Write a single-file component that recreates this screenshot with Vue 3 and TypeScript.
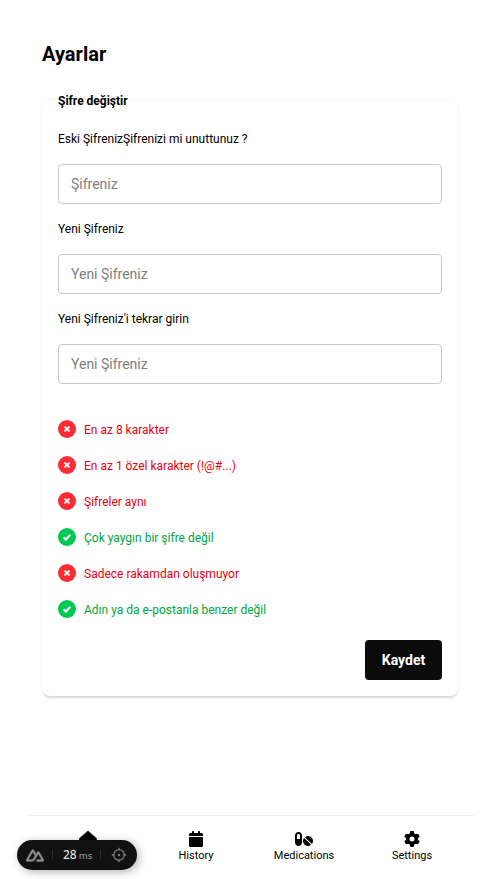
<script setup lang="ts">
import { ref } from 'vue'

interface Field { label: string; placeholder: string }
interface Rule { text: string; ok: boolean }
interface NavItem { label: string; viewBox: string; width: number; path: string }

const fields: Field[] = [
  { label: 'Eski ŞifrenizŞifrenizi mi unuttunuz ?', placeholder: 'Şifreniz' },
  { label: 'Yeni Şifreniz', placeholder: 'Yeni Şifreniz' },
  { label: "Yeni Şifreniz'i tekrar girin", placeholder: 'Yeni Şifreniz' },
]
const values = ref<string[]>(['', '', ''])

const rules: Rule[] = [
  { text: 'En az 8 karakter', ok: false },
  { text: 'En az 1 özel karakter (!@#...)', ok: false },
  { text: 'Şifreler aynı', ok: false },
  { text: 'Çok yaygın bir şifre değil', ok: true },
  { text: 'Sadece rakamdan oluşmuyor', ok: false },
  { text: 'Adın ya da e-postanla benzer değil', ok: true },
]

const nav: NavItem[] = [
  {
    label: 'Home', viewBox: '0 0 576 512', width: 18,
    path: 'M575.8 255.5c0 18-15 32.1-32 32.1h-32l.7 160.2c0 35-28 64.2-64 64.2H352V352H224v160H128c-36 0-64-29-64-64V287.600H32c-18 0-32-14-32-32.100c0-9 3-17 10-24L266.400 8c7-7 15-8 22-8s15 2 21 7L564.800 231.500c8 7 12 15 11 24z',
  },
  {
    label: 'History', viewBox: '0 0 448 512', width: 14,
    path: 'M96 32V64H48C21.5 64 0 85.5 0 112v48H448V112c0-26.5-21.5-48-48-48H352V32c0-17.7-14.3-32-32-32s-32 14.3-32 32V64H160V32c0-17.7-14.3-32-32-32S96 14.3 96 32zM448 192H0V464c0 26.5 21.5 48 48 48H400c26.5 0 48-21.5 48-48V192z',
  },
  {
    label: 'Medications', viewBox: '0 0 576 512', width: 18,
    path: 'M112 96c-26.5 0-48 21.5-48 48V256h96V144c0-26.5-21.5-48-48-48zM0 144C0 82.1 50.1 32 112 32s112 50.1 112 112V368c0 61.9-50.1 112-112 112S0 429.9 0 368V144zM554.9 399.4c-7.1 12.3-23.7 13.1-33.8 3.1L333.5 214.9c-10-10-9.3-26.7 3.1-33.8C360 167.7 387.1 160 416 160c88.4 0 160 71.6 160 160c0 28.9-7.7 56-21.1 79.4zm-59.5 59.5C472 472.3 444.9 480 416 480c-88.4 0-160-71.6-160-160c0-28.9 7.7-56 21.1-79.4c7.1-12.3 23.7-13.1 33.8-3.1L498.5 425.1c10 10 9.3 26.7-3.1 33.8z',
  },
  {
    label: 'Settings', viewBox: '0 0 512 512', width: 16,
    path: 'M495.9 166.6c3.2 8.7 .5 18.4-6.4 24.6l-43.3 39.4c1.1 8.3 1.7 16.8 1.7 25.4s-.6 17.1-1.7 25.4l43.3 39.4c6.9 6.2 9.6 15.9 6.4 24.6c-4.4 11.9-9.7 23.3-15.8 34.3l-4.7 8.1c-6.6 11-14 21.4-22.1 31.2c-5.9 7.2-15.7 9.6-24.5 6.8l-55.7-17.7c-13.4 10.3-28.2 18.9-44 25.4l-12.5 57.1c-2 9.1-9 16.3-18.2 17.8c-13.8 2.3-28 3.5-42.5 3.500s-28.700-1.200-42.500-3.500c-9.200-1.500-16.200-8.700-18.200-17.800l-12.500-57.100c-15.800-6.500-30.600-15.100-44-25.400L83.100 425.900c-8.800 2.800-18.600 .3-24.500-6.800c-8.100-9.800-15.500-20.200-22.100-31.200l-4.700-8.100c-6.100-11-11.400-22.400-15.800-34.300c-3.200-8.700-.5-18.400 6.400-24.600l43.300-39.400C64.600 273.100 64 264.600 64 256s.6-17.100 1.700-25.400L22.400 191.200c-6.900-6.200-9.600-15.900-6.400-24.600c4.400-11.900 9.700-23.300 15.800-34.300l4.700-8.100c6.600-11 14-21.400 22.100-31.200c5.900-7.200 15.700-9.600 24.500-6.800l55.700 17.700c13.400-10.300 28.200-18.900 44-25.400l12.500-57.100c2-9.100 9-16.300 18.200-17.800C227.300 1.200 241.500 0 256 0s28.700 1.200 42.500 3.500c9.200 1.500 16.200 8.700 18.200 17.800l12.500 57.100c15.800 6.500 30.600 15.100 44 25.400l55.700-17.700c8.800-2.800 18.600-.3 24.500 6.800c8.100 9.800 15.500 20.200 22.100 31.200l4.700 8.100c6.100 11 11.400 22.400 15.800 34.300zM256 336a80 80 0 1 0 0-160 80 80 0 1 0 0 160z',
  },
]
</script>

<template>
  <div class="page">
    <main class="content">
      <h1 class="title">Ayarlar</h1>
      <form class="card" @submit.prevent>
        <h2 class="legend">Şifre değiştir</h2>
        <template v-for="(field, i) in fields" :key="i">
          <label class="label" :for="`field-${i}`">{{ field.label }}</label>
          <input :id="`field-${i}`" v-model="values[i]" class="input" type="password" :placeholder="field.placeholder">
        </template>
        <ul class="rules">
          <li v-for="rule in rules" :key="rule.text" class="rule" :class="{ ok: rule.ok }">
            <span class="badge">
              <svg viewBox="0 0 18 18" width="18" height="18">
                <path v-if="rule.ok" d="M5.600 9.200l2.300 2.300 4.500-4.700" />
                <path v-else d="M6.600 6.600l4.800 4.800M11.400 6.600l-4.800 4.800" />
              </svg>
            </span>
            <span>{{ rule.text }}</span>
          </li>
        </ul>
        <button class="save" type="submit">Kaydet</button>
      </form>
    </main>

    <nav class="dock">
      <a v-for="(item, i) in nav" :key="item.label" class="dock-item">
        <svg :viewBox="item.viewBox" :width="item.width" height="16"><path :d="item.path" /></svg>
        <span v-if="i > 0">{{ item.label }}</span>
      </a>
    </nav>

    <div class="devtools">
      <svg class="nuxt" viewBox="0 0 324 225" width="18" height="13">
        <path d="M181.767 270H302.211C306.037 270 309.795 269.003 313.108 267.107C316.421 265.211 319.172 262.484 321.084 259.200C322.996 255.915 324.002 252.190 324 248.399C323.998 244.607 322.989 240.883 321.074 237.601L240.187 98.743C238.275 95.460 235.525 92.733 232.213 90.838C228.900 88.942 225.143 87.944 221.318 87.944C217.494 87.944 213.737 88.942 210.424 90.838C207.112 92.733 204.361 95.460 202.449 98.743L181.767 134.272L141.329 64.798C139.416 61.515 136.664 58.788 133.351 56.893C130.038 54.998 126.280 54 122.454 54C118.629 54 114.871 54.998 111.558 56.893C108.245 58.788 105.493 61.515 103.580 64.798L2.926 237.601C1.011 240.883.002 244.607 0 248.399C-.002 252.190 1.004 255.915 2.916 259.200C4.828 262.484 7.579 265.211 10.892 267.107C14.205 269.003 17.963 270 21.789 270H97.394C127.349 270 149.440 256.959 164.641 231.517L201.545 168.172L221.312 134.272L280.636 236.100H201.545L181.767 270ZM96.161 236.065L43.397 236.053L122.490 100.291L161.953 168.172L135.530 213.543C125.436 230.052 113.968 236.065 96.161 236.065Z" transform="translate(0 -50)" />
      </svg>
      <i class="sep" />
      <span class="time"><b>28</b><small>ms</small></span>
      <i class="sep" />
      <svg class="target" viewBox="0 0 16 16" width="16" height="16">
        <circle cx="8" cy="8" r="5.300" /><circle cx="8" cy="8" r=".6" />
        <path d="M8 .8v3M8 12.200v3M.8 8h3M12.200 8h3" />
      </svg>
    </div>
  </div>
</template>

<style>
body { margin: 0; background: #fff; }
</style>

<style scoped>
.page {
  box-sizing: border-box;
  height: 879px;
  padding: 0 26px;
  display: flex;
  flex-direction: column;
  overflow: hidden;
  font-family: Roboto, "Liberation Sans", sans-serif;
  color: #000;
}
.content { flex: 1; padding: 40px 16px 0; }
.title { margin: 0; font-size: 20px; line-height: 28px; font-weight: 700; }
.card {
  box-sizing: border-box;
  height: 595px;
  margin-top: 33px;
  padding: 0 16px;
  display: flex;
  flex-direction: column;
  border-radius: 8px;
  box-shadow: 0 0 2px rgba(0, 0, 0, .08), 0 3px 1px -1px rgba(0, 0, 0, .07), 0 3px 3px rgba(0, 0, 0, .05);
}
.legend {
  margin: -9px 0 20px;
  align-self: flex-start;
  font-size: 12px;
  line-height: 18px;
  font-weight: 700;
  background: #fff;
}
.label { font-size: 12px; line-height: 18px; }
.input {
  box-sizing: border-box;
  width: 100%;
  height: 40px;
  flex: none;
  margin: 16px 0;
  padding: 0 12px;
  border: 1px solid #c8c8c8;
  border-radius: 4px;
  outline: 0;
  font: 14px/20px Roboto, sans-serif;
}
.input::placeholder { color: #808080; opacity: 1; }
.rules {
  margin: 20px 0 0;
  padding: 0;
  display: flex;
  flex-direction: column;
  gap: 18px;
  list-style: none;
}
.rule {
  display: flex;
  gap: 8px;
  height: 18px;
  font-size: 12px;
  line-height: 20px;
  color: #e7000b;
}
.rule.ok { color: #00a63e; }
.badge {
  width: 18px;
  height: 18px;
  border-radius: 50%;
  background: #fb2c36;
}
.ok .badge { background: #00c951; }
.badge svg { display: block; fill: none; stroke: #fff; stroke-width: 2; }
.save {
  width: 77px;
  height: 40px;
  margin: 22px 0 0;
  padding: 0;
  align-self: flex-end;
  border: 0;
  border-radius: 4px;
  background: #0b0b0b;
  color: #fff;
  font: 700 14px/20px Roboto, sans-serif;
}
.dock {
  box-sizing: border-box;
  height: 64px;
  padding: 15px 8px 0;
  display: flex;
  border-top: 1px solid #f0f0f0;
}
.dock-item {
  flex: 1;
  display: flex;
  flex-direction: column;
  align-items: center;
  gap: 1px;
  font-size: 11px;
  line-height: 16px;
}
.dock-item svg { display: block; }
.devtools {
  box-sizing: border-box;
  position: absolute;
  left: 17px;
  top: 840px;
  width: 120px;
  height: 30px;
  padding: 0 9px;
  display: flex;
  align-items: center;
  border-radius: 15px;
  background: #111;
  box-shadow: 2px 2px 8px rgba(0, 0, 0, .3);
  color: #ddd;
}
.nuxt { fill: #8c8c8c; stroke: #8c8c8c; stroke-width: 6; }
.sep { width: 1px; height: 10px; margin: 0 0 0 8px; background: #2a2a2a; }
.time {
  display: flex;
  align-items: baseline;
  gap: 2px;
  margin-left: 10px;
  font-family: "Noto Sans", sans-serif;
  font-size: 12px;
  line-height: 16px;
}
.time b { font-weight: 500; }
.time small { font-size: 9.5px; font-weight: 500; color: #8c8c8c; }
.target { margin-left: 10px; fill: none; stroke: #777; stroke-width: 1.300; }
</style>
